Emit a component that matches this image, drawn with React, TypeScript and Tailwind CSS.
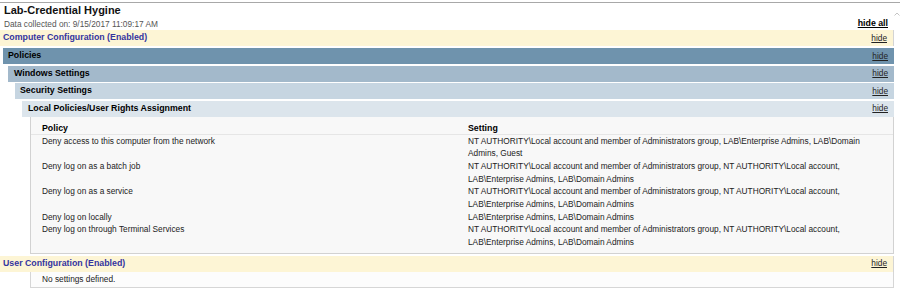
import React from 'react';

const rows: { policy: string; setting: string[] }[] = [
  {
    policy: 'Deny access to this computer from the network',
    setting: [
      'NT AUTHORITY\\Local account and member of Administrators group, LAB\\Enterprise Admins, LAB\\Domain',
      'Admins, Guest',
    ],
  },
  {
    policy: 'Deny log on as a batch job',
    setting: [
      'NT AUTHORITY\\Local account and member of Administrators group, NT AUTHORITY\\Local account,',
      'LAB\\Enterprise Admins, LAB\\Domain Admins',
    ],
  },
  {
    policy: 'Deny log on as a service',
    setting: [
      'NT AUTHORITY\\Local account and member of Administrators group, NT AUTHORITY\\Local account,',
      'LAB\\Enterprise Admins, LAB\\Domain Admins',
    ],
  },
  {
    policy: 'Deny log on locally',
    setting: ['LAB\\Enterprise Admins, LAB\\Domain Admins'],
  },
  {
    policy: 'Deny log on through Terminal Services',
    setting: [
      'NT AUTHORITY\\Local account and member of Administrators group, NT AUTHORITY\\Local account,',
      'LAB\\Enterprise Admins, LAB\\Domain Admins',
    ],
  },
];

function Hide() {
  return <span className="text-[8.3px] font-normal text-[#222] underline">hide</span>;
}

function ConfigBar({ label }: { label: string }) {
  return (
    <div className="flex items-center justify-between h-[16px] pl-[3px] pr-[6px] bg-[#fdf5d5] border-r border-[#d4d4d4]">
      <span className="text-[8.8px] font-bold text-[#34349f]">{label}</span>
      <Hide />
    </div>
  );
}

function Bar({ label, indent, bg }: { label: string; indent: string; bg: string }) {
  return (
    <div className={`flex items-center justify-between h-[16px] pl-[5px] pr-[6px] ${indent} ${bg}`}>
      <span className="text-[8.8px] font-bold text-black">{label}</span>
      <Hide />
    </div>
  );
}

export default function App() {
  return (
    <div className="w-[900px] h-[293px] bg-white pt-[2px] overflow-hidden font-['Liberation_Sans',Arial,sans-serif] text-[#222]">
      <div className="border-t border-[#a8a8a8] flex">
        <div className="w-[894px]">
          <div className="pl-[4px] h-[15px] flex items-center">
            <span className="text-[11px] font-bold text-[#111]">Lab-Credential Hygine</span>
          </div>
          <div className="flex items-center justify-between h-[12px] pl-[4px] pr-[6px]">
            <span className="text-[8.3px] text-[#555]">Data collected on: 9/15/2017 11:09:17 AM</span>
            <span className="text-[8.8px] font-bold text-black underline">hide all</span>
          </div>

          <ConfigBar label="Computer Configuration (Enabled)" />

          <div className="flex flex-col gap-[1.5px] mt-[2px] bg-white">
            <Bar label="Policies" indent="ml-[3px]" bg="bg-[#6f93ad]" />
            <Bar label="Windows Settings" indent="ml-[8px] pl-[6px]" bg="bg-[#a3b9cb]" />
            <Bar label="Security Settings" indent="ml-[15px]" bg="bg-[#c6d5e1]" />
            <Bar label="Local Policies/User Rights Assignment" indent="ml-[22px] pl-[6px]" bg="bg-[#dce5ec]" />
          </div>

          <div className="ml-[30px] bg-[#f8f8f8] border-x border-b border-[#d2d2d2] pb-[4px]">
            <div className="grid grid-cols-[426px_1fr] pl-[11px] pt-[5px] h-[18px] border-b border-[#e6e6e6] text-[8.8px] font-bold text-black leading-[13px]">
              <span>Policy</span>
              <span>Setting</span>
            </div>
            <div className="pl-[11px] text-[8.3px] leading-[12.67px]">
              {rows.map((r) => (
                <div key={r.policy} className="grid grid-cols-[426px_1fr]">
                  <span>{r.policy}</span>
                  <div className="flex flex-col whitespace-nowrap">
                    {r.setting.map((s) => (
                      <span key={s}>{s}</span>
                    ))}
                  </div>
                </div>
              ))}
            </div>
          </div>

          <div className="mt-[2px]">
            <ConfigBar label="User Configuration (Enabled)" />
          </div>
          <div className="ml-[30px] h-[16px] flex items-center pl-[11px] bg-[#fcfcfc] border-x border-b border-[#d6d6d6]">
            <span className="text-[8.3px]">No settings defined.</span>
          </div>
        </div>
        <div className="w-[6px] flex justify-center pt-[9px]">
          <svg width="6" height="4" viewBox="0 0 6 4">
            <path d="M0.5 3.5 L3 1 L5.5 3.5" fill="none" stroke="#c4c4c4" strokeWidth="1" />
          </svg>
        </div>
      </div>
    </div>
  );
}
